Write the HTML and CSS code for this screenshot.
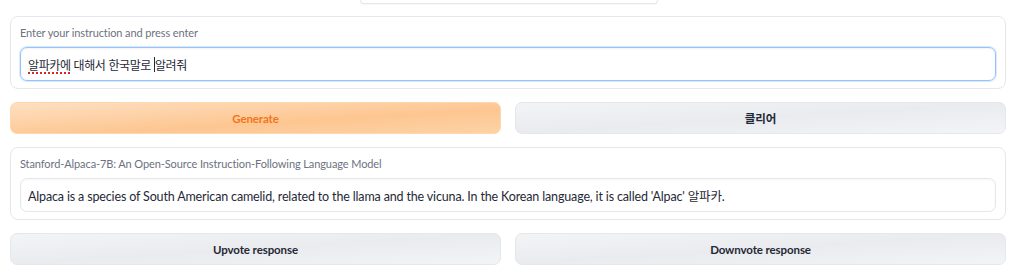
FILE: index.html
```html
<!DOCTYPE html>
<html lang="ko">
<head>
<meta charset="utf-8">
<link rel="stylesheet" href="styles.css">
</head>
<body>
<div class="page">
  <div class="top-stub"></div>
  <div class="panel panel-input">
    <div class="label">Enter your instruction and press enter</div>
    <div class="field field-focus"><span class="spell">알파카에</span> 대해서 한국말로 <span class="caret"></span>알려줘</div>
  </div>
  <div class="btn-row">
    <button class="btn btn-primary">Generate</button>
    <button class="btn btn-secondary">클리어</button>
  </div>
  <div class="panel panel-output">
    <div class="label">Stanford-Alpaca-7B: An Open-Source Instruction-Following Language Model</div>
    <div class="field field-out">Alpaca is a species of South American camelid, related to the llama and the vicuna. In the Korean language, it is called 'Alpac' 알파카.</div>
  </div>
  <div class="btn-row btn-row-last">
    <button class="btn btn-secondary">Upvote response</button>
    <button class="btn btn-secondary">Downvote response</button>
  </div>
</div>
</body>
</html>
```

FILE: styles.css
```css
* { box-sizing: border-box; }
html, body { margin: 0; padding: 0; background: #ffffff; }
body {
  font-family: "Lato", "Noto Sans CJK KR", sans-serif;
  color: #1f2937;
}
.page {
  width: 996px;
  margin-left: 10px;
  display: flex;
  flex-direction: column;
}
.top-stub {
  width: 298px;
  height: 4px;
  margin-left: 350px;
  border: 1px solid #e5e7eb;
  border-top: none;
  border-radius: 0 0 6px 6px;
  box-shadow: 0 1px 1px rgba(0,0,0,0.03);
}
.panel {
  border: 1px solid #e5e7eb;
  border-radius: 8px;
  background: #ffffff;
  padding: 8px 9px 7px 9px;
}
.panel-input { margin-top: 12px; }
.panel-output { margin-top: 13px; padding-bottom: 7px; }
.label {
  font-size: 11px;
  letter-spacing: -0.1px;
  line-height: 16px;
  color: #6b7280;
  margin-bottom: 6px;
}
.field {
  height: 34px;
  border-radius: 7px;
  padding: 0 7px;
  display: flex;
  align-items: center;
  white-space: pre;
  color: #1f2937;
}
.field-focus {
  border: 1px solid #93c5fd;
  box-shadow: 0 0 0 1px #dbeafe, inset 0 1px 2px rgba(0,0,0,0.05);
  font-family: "Noto Sans CJK KR", "Lato", sans-serif;
  font-size: 12px;
  letter-spacing: -0.4px;
}
.field-out {
  border: 1px solid #e5e7eb;
  box-shadow: inset 0 1px 2px rgba(0,0,0,0.04);
  font-family: "Lato", "Noto Sans CJK KR", sans-serif;
  font-size: 12.5px;
  letter-spacing: -0.15px;
}
.spell {
  text-decoration: underline dotted #dc2626;
  text-underline-offset: 3px;
  text-decoration-thickness: 1.5px;
}
.caret {
  display: inline-block;
  width: 1px;
  height: 15px;
  background: #1f2937;
  vertical-align: middle;
}
.btn-row {
  display: flex;
  gap: 14px;
  margin-top: 13px;
}
.btn {
  flex: 1;
  height: 32px;
  border-radius: 7px;
  font-family: "Lato", "Noto Sans CJK KR", sans-serif;
  font-size: 11.5px;
  letter-spacing: -0.1px;
  font-weight: 700;
  cursor: pointer;
}
.btn-primary {
  border: 1px solid #fed7aa;
  color: #f27520;
  background: linear-gradient(to bottom right, #fee0c2, #fdc691 60%, #fdd2a6);
}
.btn-secondary {
  border: 1px solid #e5e7eb;
  color: #1f2937;
  background: linear-gradient(to bottom right, #f3f4f6, #eaebee 50%, #f3f4f6);
}
```
